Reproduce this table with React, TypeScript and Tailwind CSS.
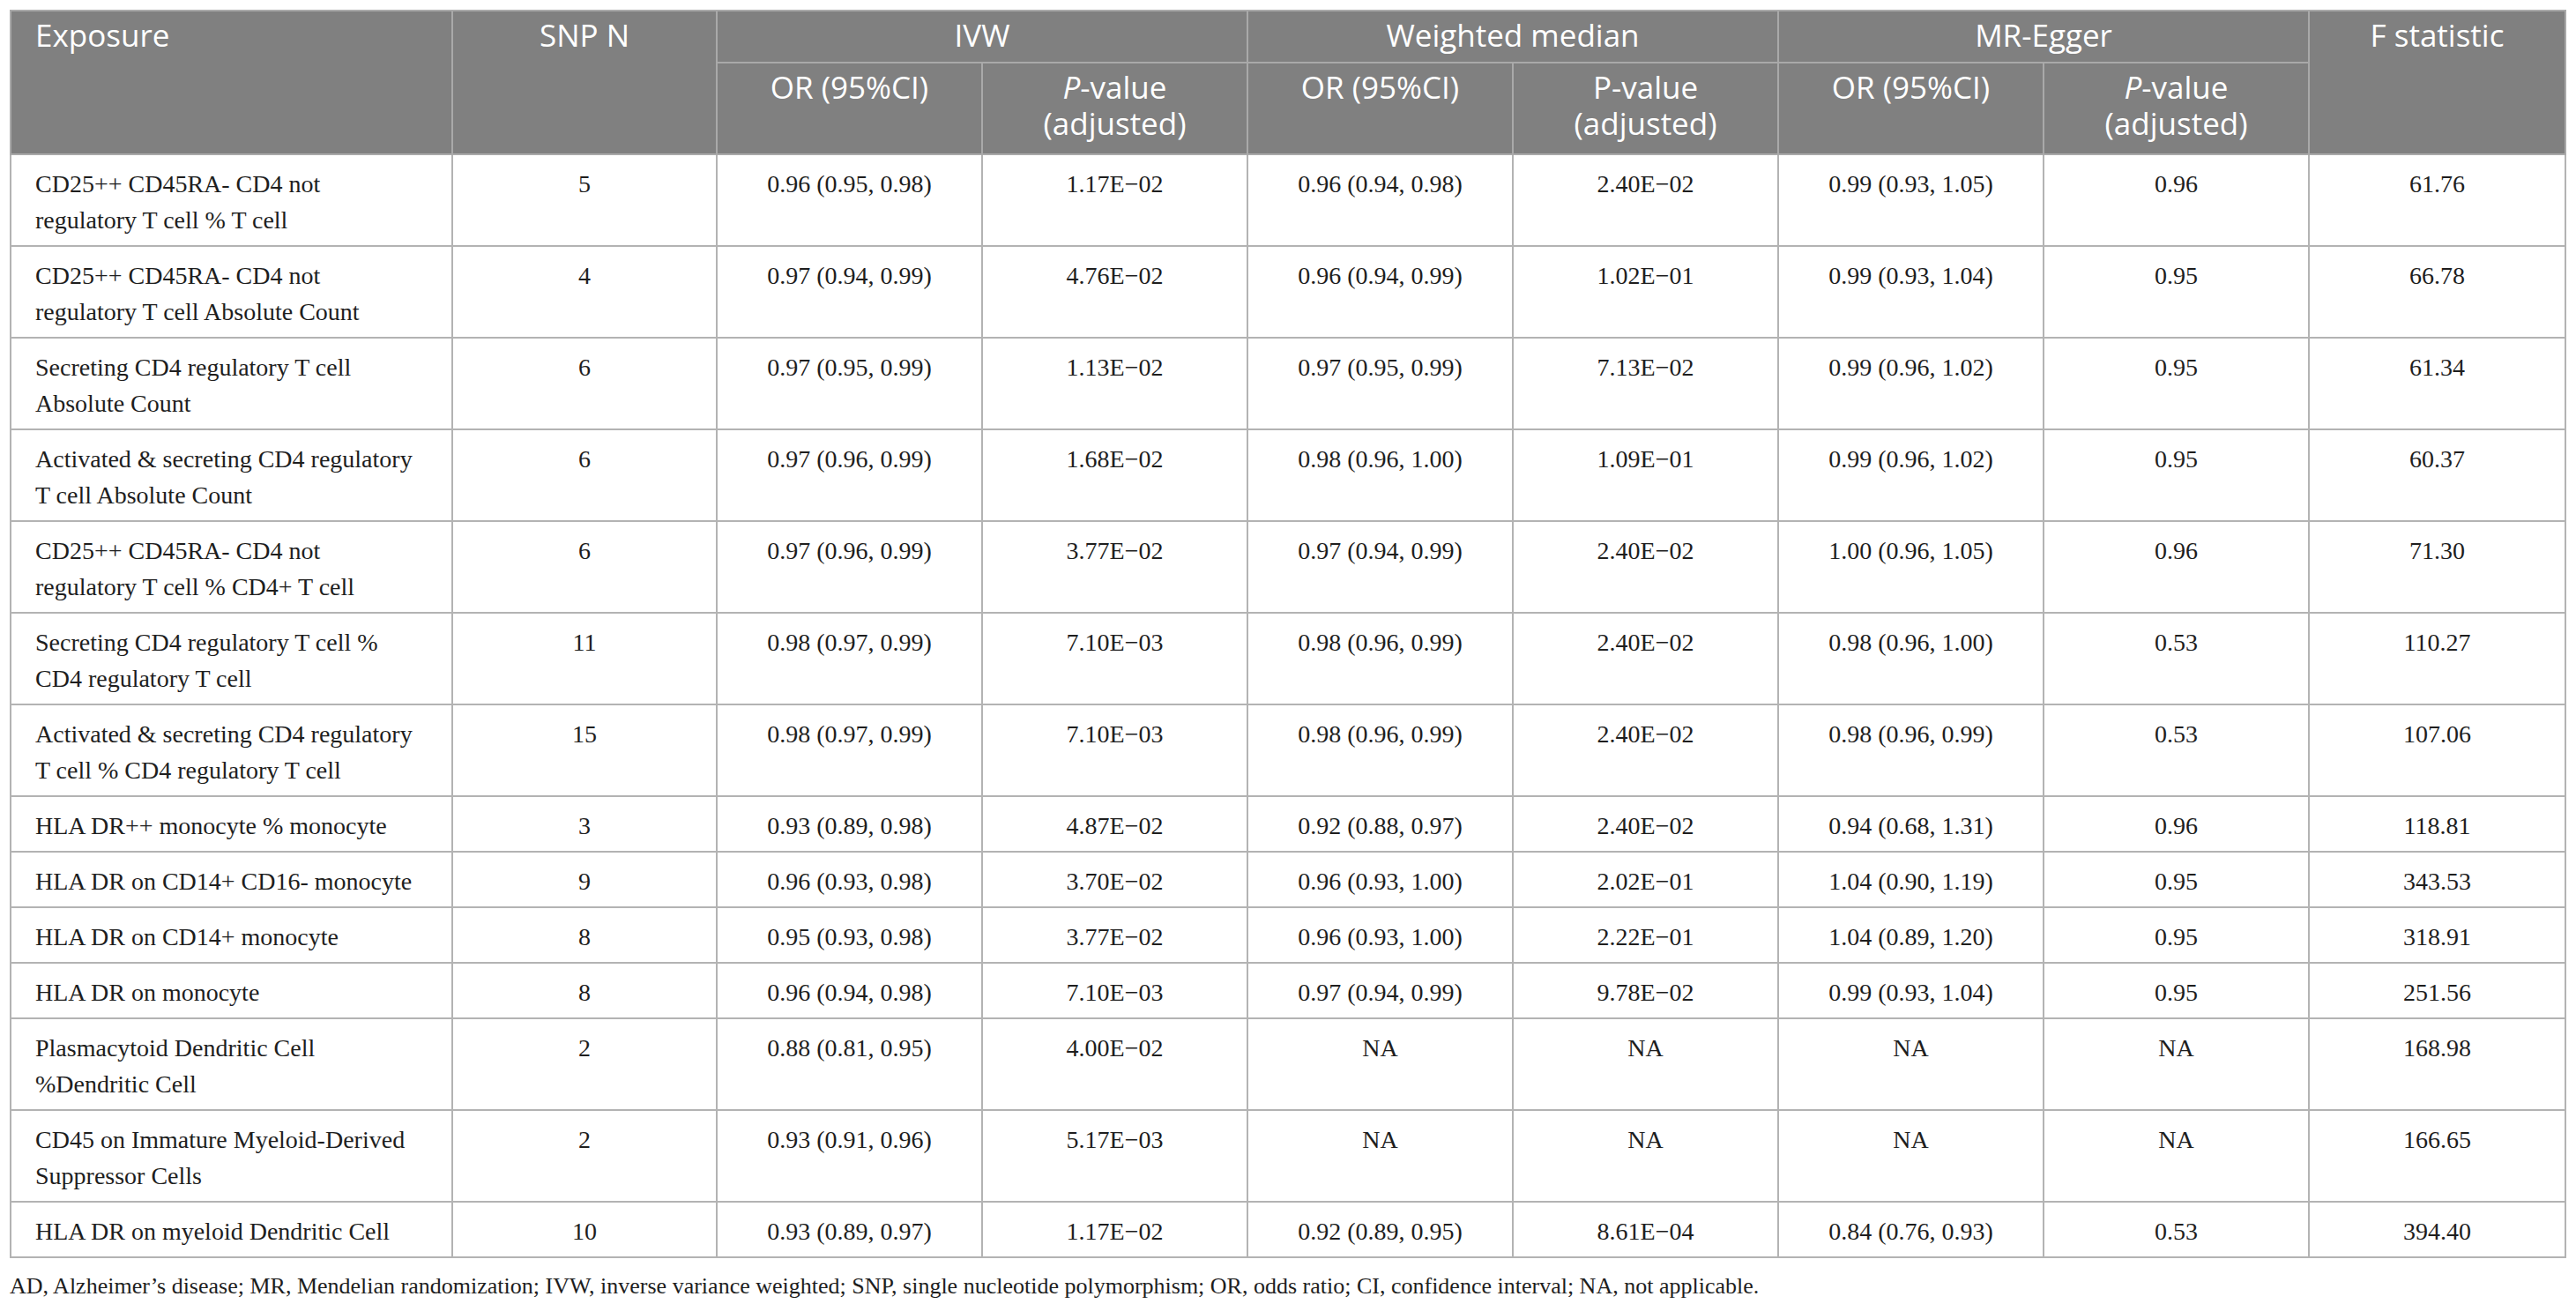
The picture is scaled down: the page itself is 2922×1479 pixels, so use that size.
import React from 'react';

type Row = {
  exposure: string[];
  snp: string;
  vals: string[];
  f: string;
};

const rows: Row[] = [
  { exposure: ['CD25++ CD45RA- CD4 not', 'regulatory T cell % T cell'], snp: '5', vals: ['0.96 (0.95, 0.98)', '1.17E−02', '0.96 (0.94, 0.98)', '2.40E−02', '0.99 (0.93, 1.05)', '0.96'], f: '61.76' },
  { exposure: ['CD25++ CD45RA- CD4 not', 'regulatory T cell Absolute Count'], snp: '4', vals: ['0.97 (0.94, 0.99)', '4.76E−02', '0.96 (0.94, 0.99)', '1.02E−01', '0.99 (0.93, 1.04)', '0.95'], f: '66.78' },
  { exposure: ['Secreting CD4 regulatory T cell', 'Absolute Count'], snp: '6', vals: ['0.97 (0.95, 0.99)', '1.13E−02', '0.97 (0.95, 0.99)', '7.13E−02', '0.99 (0.96, 1.02)', '0.95'], f: '61.34' },
  { exposure: ['Activated & secreting CD4 regulatory', 'T cell Absolute Count'], snp: '6', vals: ['0.97 (0.96, 0.99)', '1.68E−02', '0.98 (0.96, 1.00)', '1.09E−01', '0.99 (0.96, 1.02)', '0.95'], f: '60.37' },
  { exposure: ['CD25++ CD45RA- CD4 not', 'regulatory T cell % CD4+ T cell'], snp: '6', vals: ['0.97 (0.96, 0.99)', '3.77E−02', '0.97 (0.94, 0.99)', '2.40E−02', '1.00 (0.96, 1.05)', '0.96'], f: '71.30' },
  { exposure: ['Secreting CD4 regulatory T cell %', 'CD4 regulatory T cell'], snp: '11', vals: ['0.98 (0.97, 0.99)', '7.10E−03', '0.98 (0.96, 0.99)', '2.40E−02', '0.98 (0.96, 1.00)', '0.53'], f: '110.27' },
  { exposure: ['Activated & secreting CD4 regulatory', 'T cell % CD4 regulatory T cell'], snp: '15', vals: ['0.98 (0.97, 0.99)', '7.10E−03', '0.98 (0.96, 0.99)', '2.40E−02', '0.98 (0.96, 0.99)', '0.53'], f: '107.06' },
  { exposure: ['HLA DR++ monocyte % monocyte'], snp: '3', vals: ['0.93 (0.89, 0.98)', '4.87E−02', '0.92 (0.88, 0.97)', '2.40E−02', '0.94 (0.68, 1.31)', '0.96'], f: '118.81' },
  { exposure: ['HLA DR on CD14+ CD16- monocyte'], snp: '9', vals: ['0.96 (0.93, 0.98)', '3.70E−02', '0.96 (0.93, 1.00)', '2.02E−01', '1.04 (0.90, 1.19)', '0.95'], f: '343.53' },
  { exposure: ['HLA DR on CD14+ monocyte'], snp: '8', vals: ['0.95 (0.93, 0.98)', '3.77E−02', '0.96 (0.93, 1.00)', '2.22E−01', '1.04 (0.89, 1.20)', '0.95'], f: '318.91' },
  { exposure: ['HLA DR on monocyte'], snp: '8', vals: ['0.96 (0.94, 0.98)', '7.10E−03', '0.97 (0.94, 0.99)', '9.78E−02', '0.99 (0.93, 1.04)', '0.95'], f: '251.56' },
  { exposure: ['Plasmacytoid Dendritic Cell', '%Dendritic Cell'], snp: '2', vals: ['0.88 (0.81, 0.95)', '4.00E−02', 'NA', 'NA', 'NA', 'NA'], f: '168.98' },
  { exposure: ['CD45 on Immature Myeloid-Derived', 'Suppressor Cells'], snp: '2', vals: ['0.93 (0.91, 0.96)', '5.17E−03', 'NA', 'NA', 'NA', 'NA'], f: '166.65' },
  { exposure: ['HLA DR on myeloid Dendritic Cell'], snp: '10', vals: ['0.93 (0.89, 0.97)', '1.17E−02', '0.92 (0.89, 0.95)', '8.61E−04', '0.84 (0.76, 0.93)', '0.53'], f: '394.40' },
];

const th = 'border-2 border-[#a9a9a9] align-top pt-[6px] text-[35px] leading-[41px] font-normal text-white';
const td = 'border-2 border-[#b3b3b3] align-top pt-[12px] pb-[8px] text-[28px] leading-[41px] text-center';

function PValue({ italic }: { italic: boolean }) {
  return (
    <>
      {italic ? <i>P</i> : 'P'}-value
      <br />
      (adjusted)
    </>
  );
}

export default function App() {
  return (
    <div className="min-h-screen bg-white pl-[11px] pt-[11px]" style={{ fontFamily: '"Liberation Serif", "Times New Roman", serif' }}>
      <table className="border-collapse table-fixed w-[2898px] text-[#1e1e1e]">
        <colgroup>
          <col className="w-[501px]" />
          <col className="w-[300px]" />
          <col className="w-[301px]" />
          <col className="w-[301px]" />
          <col className="w-[301px]" />
          <col className="w-[301px]" />
          <col className="w-[301px]" />
          <col className="w-[301px]" />
          <col className="w-[291px]" />
        </colgroup>
        <thead className="bg-[#808080] font-['Open_Sans',sans-serif]">
          <tr>
            <th rowSpan={2} className={`${th} text-left pl-[27px]`}>Exposure</th>
            <th rowSpan={2} className={`${th} text-center`}>SNP N</th>
            <th colSpan={2} className={`${th} text-center pb-[10px]`}>IVW</th>
            <th colSpan={2} className={`${th} text-center pb-[10px]`}>Weighted median</th>
            <th colSpan={2} className={`${th} text-center pb-[10px]`}>MR-Egger</th>
            <th rowSpan={2} className={`${th} text-center`}>F statistic</th>
          </tr>
          <tr>
            <th className={`${th} text-center pb-[14px]`}>OR (95%CI)</th>
            <th className={`${th} text-center pb-[14px]`}><PValue italic /></th>
            <th className={`${th} text-center pb-[14px]`}>OR (95%CI)</th>
            <th className={`${th} text-center pb-[14px]`}><PValue italic={false} /></th>
            <th className={`${th} text-center pb-[14px]`}>OR (95%CI)</th>
            <th className={`${th} text-center pb-[14px]`}><PValue italic /></th>
          </tr>
        </thead>
        <tbody>
          {rows.map((r, i) => (
            <tr key={i}>
              <td className={`${td} text-left pl-[27px] whitespace-nowrap`}>
                {r.exposure.map((line, j) => (
                  <div key={j}>{line}</div>
                ))}
              </td>
              <td className={td}>{r.snp}</td>
              {r.vals.map((v, j) => (
                <td key={j} className={td}>{v}</td>
              ))}
              <td className={td}>{r.f}</td>
            </tr>
          ))}
        </tbody>
      </table>
      <p className="mt-[14px] text-[26px] leading-[36px] text-[#1e1e1e]">
        AD, Alzheimer’s disease; MR, Mendelian randomization; IVW, inverse variance weighted; SNP, single nucleotide polymorphism; OR, odds ratio; CI, confidence interval; NA, not applicable.
      </p>
    </div>
  );
}
